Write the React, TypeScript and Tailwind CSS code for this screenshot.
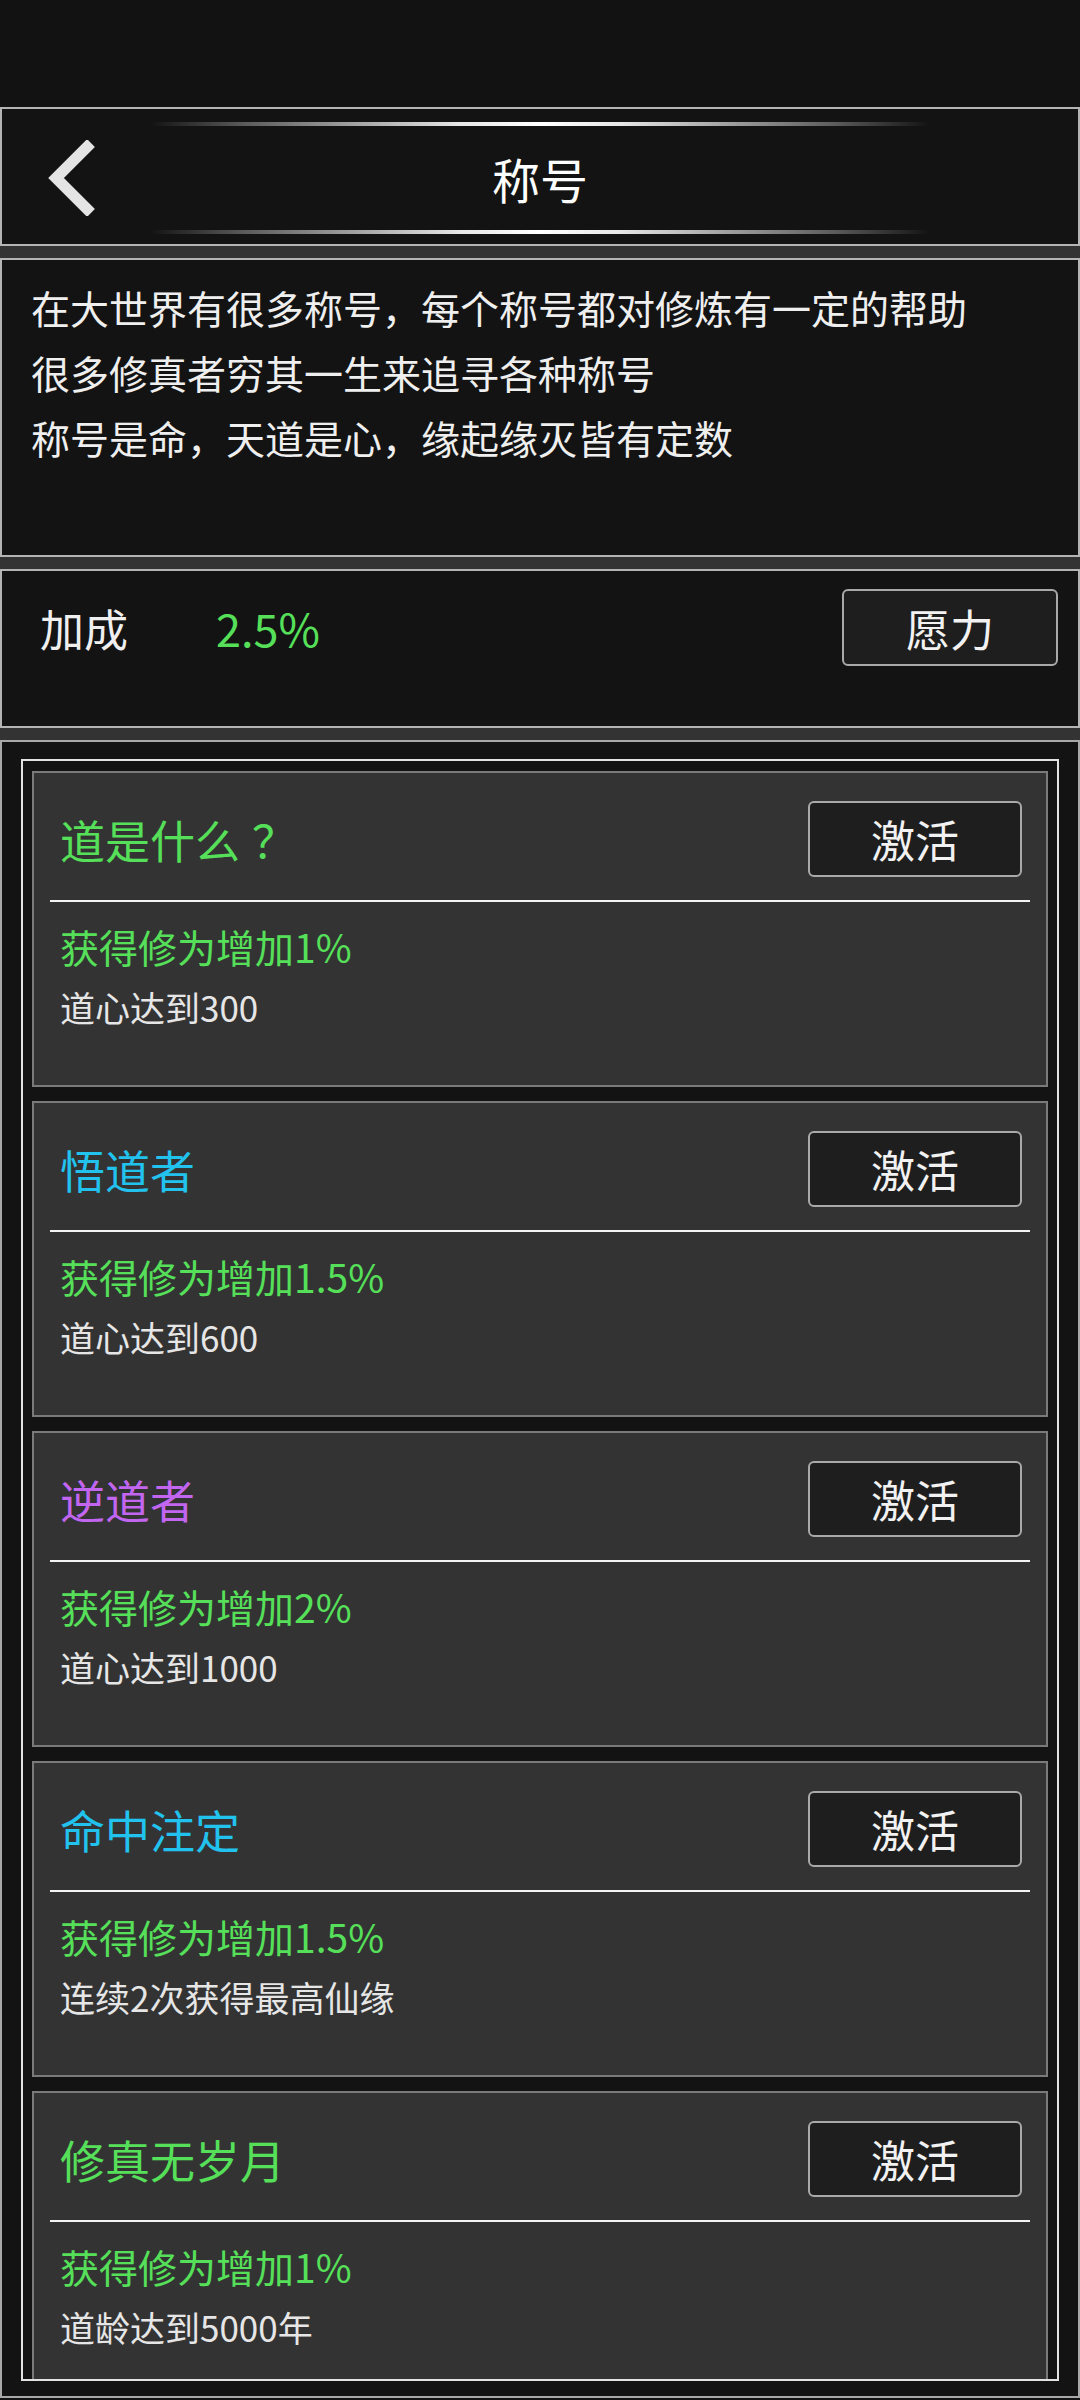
import React from 'react'

const font = { fontFamily: '"Noto Sans CJK SC", "Noto Sans", sans-serif' }

const GREEN = 'text-[#56e05a]'

interface Title {
  name: string
  color: string
  effect: string
  need: string
}

const titles: Title[] = [
  { name: '道是什么', color: 'text-[#56e05a]', effect: '获得修为增加1%', need: '道心达到300' },
  { name: '悟道者', color: 'text-[#22c2ee]', effect: '获得修为增加1.5%', need: '道心达到600' },
  { name: '逆道者', color: 'text-[#c266f2]', effect: '获得修为增加2%', need: '道心达到1000' },
  { name: '命中注定', color: 'text-[#22c2ee]', effect: '获得修为增加1.5%', need: '连续2次获得最高仙缘' },
  { name: '修真无岁月', color: 'text-[#56e05a]', effect: '获得修为增加1%', need: '道龄达到5000年' },
]

// ── pieces ─────────────────────────────────────────────────────────────────
const Band = () => <div className="h-[12px] bg-[#333333]" />

const GlowLine = () => (
  <div className="w-[780px] h-[4px] mx-auto rounded-full bg-[linear-gradient(90deg,transparent,#5a5a5a_12%,#e8e8e8_40%,#ffffff_50%,#e8e8e8_60%,#5a5a5a_88%,transparent)]" />
)

const DarkButton = ({ children, className = '' }: { children: React.ReactNode; className?: string }) => (
  <button
    className={`flex items-center justify-center bg-[#1e1e1e] border-2 border-[#a9a9a9] rounded-[6px] text-[44px] leading-none text-[#f2f2f2] ${className}`}
  >
    {children}
  </button>
)

const TitleCard = ({ t, question }: { t: Title; question?: boolean }) => (
  <div className="shrink-0 h-[316px] bg-[#333333] border-2 border-[#7a7a7a]">
    <div className="flex items-center justify-between pt-[28px] pl-[26px] pr-[24px]">
      <span className={`text-[45px] leading-none ${t.color}`}>
        {t.name}
        {question && <span className="inline-block pl-[12px]">？</span>}
      </span>
      <DarkButton className="w-[214px] h-[76px]">激活</DarkButton>
    </div>
    <div className="mt-[23px] mx-[16px] h-[2px] bg-[#f4f4f4]" />
    <div className={`mt-[19px] pl-[26px] text-[39px] leading-[50px] ${GREEN}`}>{t.effect}</div>
    <div className="mt-[14px] pl-[26px] text-[35px] leading-[44px] text-[#e6e6e6]">{t.need}</div>
  </div>
)

export default function App() {
  return (
    <div className="w-[1080px] h-[2400px] bg-[#121212] overflow-hidden" style={font}>
      {/* status bar */}
      <div className="h-[107px] bg-[#121212]" />

      {/* header */}
      <div className="h-[139px] bg-[#131313] border-2 border-[#b4b4b4] flex flex-col">
        <div className="mt-[13px]">
          <GlowLine />
        </div>
        <div className="flex-1 grid grid-cols-[1fr_auto_1fr] items-center">
          <div className="pl-[45px] flex items-center">
            <svg width="50" height="76" viewBox="0 0 50 76" fill="none">
              <polyline
                points="44,3 9,38 44,73"
                stroke="#e4e4e4"
                strokeWidth="11"
                strokeLinejoin="miter"
                strokeMiterlimit="4"
              />
            </svg>
          </div>
          <span className="text-[48px] leading-none text-white">称号</span>
          <div />
        </div>
        <div className="mb-[10px]">
          <GlowLine />
        </div>
      </div>

      <Band />

      {/* description */}
      <div className="h-[299px] bg-[#131313] border-2 border-[#b4b4b4] pt-[15px] pl-[29px] text-[39px] leading-[65px] text-[#efefef]">
        <p>在大世界有很多称号，每个称号都对修炼有一定的帮助</p>
        <p>很多修真者穷其一生来追寻各种称号</p>
        <p>称号是命，天道是心，缘起缘灭皆有定数</p>
      </div>

      <Band />

      {/* bonus */}
      <div className="h-[159px] bg-[#131313] border-2 border-[#b4b4b4] pt-[18px] pl-[38px] pr-[20px]">
        <div className="flex items-center">
          <span className="text-[44px] leading-none text-[#efefef]">加成</span>
          <span className={`ml-[88px] text-[45px] leading-none ${GREEN}`}>2.5%</span>
          <DarkButton className="ml-auto w-[216px] h-[77px]">愿力</DarkButton>
        </div>
      </div>

      <Band />

      {/* title list */}
      <div className="h-[1658px] bg-[#131313] border-2 border-[#a8a8a8] pt-[17px] px-[19px] pb-[15px] flex flex-col">
        <div className="flex-1 min-h-0 border-2 border-[#e2e2e2] overflow-hidden pt-[10px] px-[9px] flex flex-col gap-[14px]">
          {titles.map((t, i) => (
            <TitleCard key={t.name} t={t} question={i === 0} />
          ))}
        </div>
      </div>
    </div>
  )
}
